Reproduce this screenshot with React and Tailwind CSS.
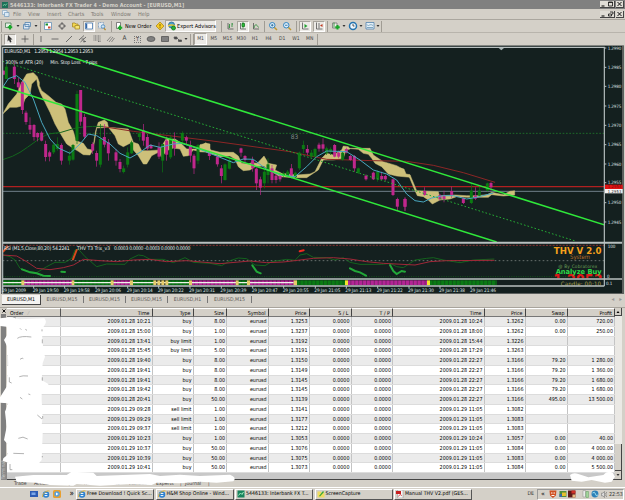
const UP = "#0b7a12";
const DOWN = "#c0278c";
const CLOUD = "#cdc07a";

const menus = [
  ["File", "w-[15px]"],
  ["View", "w-[19px]"],
  ["Insert", "w-[21px]"],
  ["Charts", "w-[23px]"],
  ["Tools", "w-[20px]"],
  ["Window", "w-[27px]"],
  ["Help", "w-[14px]"],
];

const timeframes = ["M5", "M15", "M30", "H1", "H4", "D1", "W1", "MN"];

const chartTabs = [
  ["EURUSD,M15", "w-[43px]"],
  ["EURUSD,M15", "w-[42px]"],
  ["EURUSD,M15", "w-[42px]"],
  ["EURUSD,H1", "w-[40px]"],
  ["EURUSD,M15", "w-[44px]"],
];

const columns = [
  ["Time", "w-[91.5px]"],
  ["Type", "w-[41px]"],
  ["Size", "w-[33.5px]"],
  ["Symbol", "w-[41.5px]"],
  ["Price", "w-[41px]"],
  ["S / L", "w-[42px]"],
  ["T / P", "w-[41.5px]"],
  ["Time", "w-[91.5px]"],
  ["Price", "w-[41px]"],
  ["Swap", "w-[42px]"],
  ["Profit", "w-[47.5px]"],
];

const orders = [
  ["2009.01.28 10:21", "buy", "8.00", "1.3253", "2009.01.28 10:24", "1.3262", "0.00", "720.00"],
  ["2009.01.28 15:00", "buy", "1.00", "1.3237", "2009.01.28 18:00", "1.3262", "0.00", "250.00"],
  ["2009.01.28 13:41", "buy limit", "1.00", "1.3192", "2009.01.28 15:44", "1.3226", "", ""],
  ["2009.01.28 15:45", "buy limit", "5.00", "1.3191", "2009.01.28 17:29", "1.3263", "", ""],
  ["2009.01.28 19:40", "buy", "8.00", "1.3150", "2009.01.28 22:27", "1.3166", "79.20", "1 280.00"],
  ["2009.01.28 19:41", "buy", "8.00", "1.3149", "2009.01.28 22:27", "1.3166", "79.20", "1 360.00"],
  ["2009.01.28 19:41", "buy", "8.00", "1.3145", "2009.01.28 22:27", "1.3166", "79.20", "1 680.00"],
  ["2009.01.28 19:42", "buy", "8.00", "1.3145", "2009.01.28 22:27", "1.3166", "79.20", "1 680.00"],
  ["2009.01.28 20:41", "buy", "50.00", "1.3139", "2009.01.28 22:27", "1.3166", "495.00", "13 500.00"],
  ["2009.01.29 09:28", "sell limit", "1.00", "1.3141", "2009.01.29 11:05", "1.3082", "", ""],
  ["2009.01.29 09:29", "sell limit", "1.00", "1.3177", "2009.01.29 11:05", "1.3083", "", ""],
  ["2009.01.29 09:37", "sell limit", "1.00", "1.3212", "2009.01.29 11:05", "1.3083", "", ""],
  ["2009.01.29 10:23", "buy", "1.00", "1.3053", "2009.01.29 10:24", "1.3057", "0.00", "40.00"],
  ["2009.01.29 10:37", "buy", "50.00", "1.3076", "2009.01.29 11:05", "1.3084", "0.00", "4 000.00"],
  ["2009.01.29 10:39", "buy", "50.00", "1.3075", "2009.01.29 11:05", "1.3083", "0.00", "4 000.00"],
  ["2009.01.29 10:41", "buy", "50.00", "1.3073", "2009.01.29 11:05", "1.3084", "0.00", "5 500.00"],
];

// x, high, body top, body bottom, low, rising
const candlesLeft = [
  [11, 80, 80, 92, 92, 0], [19, 55, 68, 105, 105, 1], [43, 55, 68, 105, 120, 0], [55, 102, 115, 130, 145, 0],
  [67, 110, 115, 198, 210, 0], [78, 200, 206, 234, 242, 0], [90, 220, 243, 257, 270, 0], [102, 240, 243, 279, 290, 0],
  [113, 265, 267, 280, 292, 0], [125, 262, 266, 290, 292, 0], [137, 290, 300, 339, 352, 0], [149, 320, 325, 338, 352, 0],
  [161, 295, 302, 325, 330, 1], [172, 280, 300, 315, 320, 1], [184, 298, 303, 350, 362, 0], [208, 320, 335, 350, 362, 1],
  [219, 300, 303, 347, 350, 1], [231, 140, 150, 290, 300, 1], [242, 138, 138, 233, 245, 0], [254, 210, 219, 278, 285, 0],
  [278, 295, 300, 320, 330, 0], [290, 320, 327, 350, 368, 0], [301, 240, 285, 362, 370, 1], [313, 240, 279, 302, 310, 0],
  [325, 285, 295, 328, 350, 0], [348, 315, 325, 350, 365, 0], [360, 345, 354, 375, 385, 0], [371, 365, 373, 384, 388, 1],
  [383, 310, 325, 362, 370, 1], [395, 290, 295, 328, 330, 1], [418, 265, 268, 279, 290, 1], [430, 240, 260, 290, 305, 0],
  [442, 270, 279, 314, 320, 0], [453, 300, 303, 313, 315, 0], [477, 295, 310, 338, 345, 0], [488, 300, 300, 350, 385, 1],
  [500, 278, 290, 332, 350, 0], [512, 275, 280, 340, 345, 1], [523, 265, 290, 312, 335, 0], [547, 262, 267, 290, 300, 1],
  [559, 275, 280, 290, 300, 0], [571, 290, 303, 335, 355, 0], [582, 330, 335, 373, 390, 0], [594, 300, 303, 350, 360, 1],
];

const candlesMiddle = [
  [28, 155, 158, 168, 180, 0], [52, 165, 170, 193, 200, 0], [64, 195, 205, 228, 250, 0], [75, 190, 193, 240, 242, 1],
  [88, 175, 180, 206, 208, 1], [123, 143, 145, 158, 170, 0], [135, 165, 168, 180, 190, 0], [158, 170, 180, 205, 215, 0],
  [169, 203, 206, 250, 270, 0], [181, 230, 238, 263, 285, 0], [193, 200, 215, 250, 265, 1], [204, 175, 193, 225, 250, 1],
  [216, 195, 205, 240, 250, 0], [228, 220, 227, 240, 250, 0], [240, 220, 228, 238, 245, 0], [251, 215, 220, 228, 230, 1],
  [263, 210, 215, 228, 230, 1], [274, 192, 205, 227, 235, 0], [286, 215, 218, 232, 238, 1], [298, 155, 158, 205, 210, 1],
  [310, 122, 135, 147, 160, 1], [322, 135, 147, 158, 165, 0], [334, 150, 158, 170, 172, 1], [345, 143, 147, 170, 172, 1],
  [357, 128, 134, 146, 155, 0], [369, 115, 133, 146, 155, 0], [380, 140, 145, 160, 165, 1], [392, 142, 147, 155, 165, 1],
  [404, 132, 135, 170, 172, 0], [416, 152, 158, 170, 175, 0], [428, 155, 158, 180, 182, 1], [439, 143, 147, 158, 160, 0],
  [451, 165, 168, 180, 182, 0], [463, 165, 168, 205, 215, 0], [475, 203, 205, 218, 222, 1], [498, 223, 227, 238, 242, 0],
  [520, 215, 218, 238, 240, 0], [533, 210, 215, 238, 245, 1], [545, 215, 228, 238, 240, 0], [556, 225, 228, 238, 242, 0],
  [579, 235, 238, 285, 288, 0], [592, 293, 297, 320, 333, 0], [615, 293, 297, 320, 333, 0],
];

const candlesRight = [
  [15, 460, 465, 488, 500, 0], [74, 430, 441, 453, 455, 0], [120, 450, 453, 466, 470, 0], [132, 440, 455, 466, 475, 0],
  [155, 428, 441, 453, 462, 0], [190, 460, 463, 477, 480, 0], [214, 418, 440, 477, 480, 1], [226, 430, 455, 464, 468, 0],
  [238, 425, 440, 455, 458, 1], [262, 416, 418, 440, 442, 1], [273, 414, 417, 430, 440, 0],
];

const prices = [
  ["1.2990", 144], ["1.2985", 202], ["1.2980", 259], ["1.2975", 318], ["1.2970", 376],
  ["1.2965", 434], ["1.2960", 492], ["1.2955", 548], ["1.2950", 608], ["1.2945", 666],
];

const times = [
  ["29 Jan 2009", 5], ["29 Jan 19:50", 98], ["29 Jan 19:58", 191], ["29 Jan 20:06", 285],
  ["29 Jan 20:14", 380], ["29 Jan 20:22", 473], ["29 Jan 20:31", 567], ["29 Jan 20:39", 661],
  ["29 Jan 20:47", 755], ["29 Jan 20:55", 848], ["29 Jan 21:05", 943], ["29 Jan 21:13", 1036],
  ["29 Jan 21:22", 1130], ["29 Jan 21:30", 1224], ["29 Jan 21:38", 1317], ["29 Jan 21:46", 1410],
];

const strip = [
  [8, 57, "#0a7a14"], [72, 146, "#b32595"], [222, 112, "#0a7a14"], [341, 50, "#b32595"], [399, 62, "#0a7a14"],
  [505, 62, "#0a7a14"], [576, 131, "#b32595"], [716, 26, "#0a7a14"], [750, 132, "#b32595"], [890, 145, "#0a7a14"],
  [1044, 237, "#b32595"], [1290, 200, "#0a7a14"],
];

const stripMarks = [
  [64, 9], [215, 8], [332, 9], [390, 9], [460, 9], [472, 9], [484, 9], [496, 9],
  [567, 9], [707, 9], [741, 9], [881, 10], [1035, 9], [1281, 9],
];

function Candles({ data }) {
  return data.map(([x, high, top, bottom, low, rising]) => (
    <g key={x} fill={rising ? UP : DOWN}>
      <rect x={x - 1} y={high} width="2" height={low - high} />
      <rect x={x - 4.5} y={top} width="9" height={bottom - top} />
    </g>
  ));
}

function Chart() {
  return (
    <svg
      viewBox="0 135 1875 747"
      className="block h-[249px] w-[625px] shrink-0"
      fontFamily="'DejaVu Sans Condensed', 'DejaVu Sans', sans-serif"
    >
      <defs>
        <clipPath id="price-pane">
          <rect x="8" y="144" width="1804" height="582" />
        </clipPath>
        <clipPath id="rsi-pane">
          <rect x="8" y="731" width="1804" height="104" />
        </clipPath>
        <clipPath id="strip-pane">
          <rect x="8" y="838" width="1804" height="19" />
        </clipPath>
      </defs>

      <rect x="0" y="135" width="1875" height="747" fill="#d4d0c8" />
      <rect x="3" y="136" width="1869" height="746" fill="#5c605e" />
      <rect x="6" y="138" width="1860" height="741" fill="#14201f" />

      {/* Price pane */}
      <g clipPath="url(#price-pane)" fill="none">
        <path d="M8 400H1812" stroke="#1d6a2a" strokeWidth="3" strokeDasharray="5 5" />
        <path d="M9 560H1812" stroke="#b02020" strokeWidth="3.5" />
        <path d="M9 574H1812" stroke="#70808a" strokeWidth="3" />

        <g fill={CLOUD} stroke={CLOUD} strokeWidth="1.5">
          <g transform="translate(0 132)">
            <path d="M8 210L25 180 50 150 65 115 80 90 100 86 112 98 118 115 118 125 125 140 145 155 168 175 185 180 195 195 205 235 220 262 228 290 250 298 262 315 278 318 270 333 250 332 235 322 215 310 200 300 185 275 165 240 150 205 135 175 120 145 113 125 110 105 95 120 90 150 75 165 68 185 50 190 30 190Z" />
            <path d="M278 318L286 265 290 250 295 235 313 228 322 235 325 250 290 252 284 290Z" />
            <path d="M325 250L385 255 400 295 415 300 425 320 450 320 478 318 500 282 515 285 525 285 540 295 560 315 590 315 600 302 620 298 630 300 630 325 600 323 580 318 565 335 550 337 540 315 520 312 500 320 485 340 475 325 455 335 440 360 430 360 415 335 400 318 390 298 370 308 355 300 345 275Z" />
          </g>
          <g transform="translate(600 300)">
            <path d="M0 138L18 128 32 150 60 157 100 157 115 168 125 190 145 192 155 188 172 190 192 168 205 190 230 195 225 210 245 220 290 225 330 222 345 215 365 175 380 160 400 165 425 150 430 138 445 140 450 147 438 150 430 175 400 180 370 180 355 210 340 220 320 233 285 233 240 230 215 215 200 205 190 198 165 200 150 210 130 212 115 200 105 178 90 168 60 170 30 160 15 155 0 155Z" />
            <path d="M445 145H510L520 165 550 185 590 197 608 207 615 225 630 225 630 232 590 228 565 222 545 200 525 190 515 175 505 163 490 160 475 148Z" />
          </g>
          <g transform="translate(1200 132)">
            <path d="M0 372L12 375 18 390 30 392 50 440 115 443 118 455 165 453 200 455 230 455 262 452 275 445 310 452 330 442 344 440 344 453 310 456 275 452 265 460 230 460 200 460 170 458 150 465 120 468 97 480 85 468 70 458 52 455 45 440 27 397 0 395Z" />
          </g>
        </g>

        <path d="M8 479Q40 470 60 457T110 422 160 400 210 389 310 379" stroke="#14661e" strokeWidth="3" />
        <path d="M310 380L400 394 630 422 870 455 980 478 1120 482 1220 484 1300 496 1390 518 1485 547" stroke="#8c2626" strokeWidth="3" />

        <g transform="translate(0 132)"><Candles data={candlesLeft} /></g>
        <g transform="translate(600 300)"><Candles data={candlesMiddle} /></g>
        <g transform="translate(1200 132)"><Candles data={candlesRight} /></g>

        <g stroke="#4aa8c0" strokeWidth="3" strokeLinejoin="round">
          <path d="M8 262L25 236 50 227 75 247 100 297 125 367 150 417 175 444 210 460 240 432 265 402 290 407 330 432 360 460 390 474 420 457 450 435 480 442 520 432 545 430 600 448 660 472 700 488 730 477 760 478 800 508 840 525 885 530 920 500 950 470 980 453 1040 455 1080 480 1120 510 1160 522 1190 540 1220 582 1245 602 1270 606 1295 594 1330 587 1360 587 1400 597 1430 592 1480 579" />
        </g>

        <g stroke="#2fe83a">
          <path d="M100 136L1814 675" strokeWidth="4.5" />
          <path d="M8 260L1490 726" strokeWidth="4.5" />
          <path d="M8 184L1726 723" stroke="#25a834" strokeWidth="3" strokeDasharray="5 6" />
        </g>
        <path d="M1496 144h16l-8 7z" fill="#a8b4b4" />
        <text x="872" y="417" fontSize="19" fill="#808a88" fontFamily="'DejaVu Sans Mono'">83</text>
      </g>

      {/* Price pane captions */}
      <g fill="#e6eaea" fontSize="15">
        <text x="13" y="159" textLength="79">EURUSD,M1</text>
        <text x="103" y="159" textLength="176">1.2953 1.2954 1.2953 1.2953</text>
        <text x="16" y="191" textLength="114">300% of ATR (20)</text>
        <text x="151" y="191" textLength="91">Min. Stop Loss</text>
        <text x="248" y="191" textLength="44">- 7 pips</text>
      </g>

      {/* Oscillator pane */}
      <g clipPath="url(#rsi-pane)" fill="none" strokeWidth="3">
        <path d="M8 736H1812" stroke="#8a3030" strokeDasharray="6 4" />
        <path d="M8 782H1812" stroke="#68706e" strokeDasharray="5 7" />
        <path d="M8 830H1812" stroke="#14501c" strokeDasharray="3 4" />
        <path d="M8 765L30 770 45 780 60 805 90 815 110 818 140 800 165 787 195 787 215 775 225 750 235 747 255 770 290 800 320 792 375 793 390 777 415 765 430 767 450 778 490 778 520 788 555 773 580 787 630 790 665 797 690 782 715 774 740 776 765 795 795 797 815 785 860 778 885 781 900 765 920 761 940 772 980 773 1005 780 1030 773 1050 787 1080 793 1145 793 1170 790 1190 800 1210 803 1245 780 1280 775 1300 773 1330 780 1380 788 1420 780 1483 777" stroke="#14701e" strokeWidth="2.5" />
        <path d="M8 765L50 768 80 785 110 805 150 809 190 803 220 795 250 778 300 782 350 785 400 780 450 778 500 785 560 782 660 791 750 783 800 788 850 786 900 780 940 775 1000 773 1050 777 1100 785 1150 790 1245 795 1290 785 1340 782 1483 781" stroke="#a02838" />
        <g strokeWidth="6" strokeLinecap="round">
          <path d="M10 754L22 741M230 750L219 778" stroke="#d84a1c" />
          <path d="M899 754L911 751" stroke="#f02a20" />
          <path d="M66 808L90 817 110 820 130 827 150 828M184 815L195 816M757 796L770 815 782 820M1050 805L1065 813 1080 817 1098 827M1170 795L1180 813 1190 822 1205 813 1215 815" stroke="#22a838" />
        </g>
      </g>

      <g fill="#e6eaea" fontSize="15">
        <text x="12" y="749" textLength="197">RSI (M1,5,Close,80,20) 54.2241</text>
        <text x="231" y="749" textLength="99">THV T3 Trix_v3</text>
        <text x="342" y="749" textLength="229">0.0003 0.0000 -0.0003 0.0000 0.0000</text>
      </g>

      <g clipPath="url(#rsi-pane)" textAnchor="middle">
        <text x="1733" y="761" fontSize="27" fontWeight="bold" fill="#f5a01c" textLength="143" lengthAdjust="spacingAndGlyphs">THV V 2.0</text>
        <text x="1740" y="778" fontSize="18" fill="#b86c2c" textLength="60">System</text>
        <text x="1733" y="803" fontSize="14" fill="#6ea05a" textLength="117">@ By Cobratorex</text>
        <text x="1734" y="859" fontSize="50" fontWeight="bold" fill="#e01818" textLength="148" lengthAdjust="spacingAndGlyphs">1.2953</text>
        <text x="1736" y="823" fontSize="21" fontWeight="bold" fill="#2ed848" textLength="138" lengthAdjust="spacingAndGlyphs">Analyze Buy</text>
      </g>

      {/* Trend strip */}
      <g clipPath="url(#strip-pane)">
        {strip.map(([x, width, fill]) => (
          <rect key={x} x={x} y="841" width={width} height="15" fill={fill} />
        ))}
        <path d="M8 848.500H1490" stroke="#14201f" strokeOpacity=".35" strokeWidth="15" strokeDasharray="3 8.720" />
        <path d="M8 848H881" stroke="#eef2ea" strokeWidth="4" />
        {stripMarks.map(([x, width]) => (
          <rect key={x} x={x} y="841" width={width} height="15" fill={x > 1000 ? "#f2e62e" : "#e6cc6a"} />
        ))}
        <text x="1682" y="858" fontSize="18" fill="#b0a850" textLength="121">Candle: 00:10</text>
      </g>

      {/* Frames and axes */}
      <g fill="none" stroke="#b8c0c0">
        <path d="M8 882V142H1813V858" strokeWidth="3.500" />
        <path d="M8 728H1866" strokeWidth="6" />
        <path d="M8 837H1866M8 858H1813" strokeWidth="4" />
        {prices.map(([label, y]) => (
          <path key={label} d={`M1813 ${y}h6`} strokeWidth="3" />
        ))}
        {times.map(([label, x]) => (
          <path key={label} d={`M${x + 3} 858v6`} strokeWidth="3" />
        ))}
      </g>
      <g fill="#dde2e2" fontSize="13.5">
        {prices.map(([label, y]) => (
          <text key={label} x="1823" y={y + 5} textLength="41">{label}</text>
        ))}
        <rect x="1815" y="554" width="53" height="13" fill="#e01414" />
        <rect x="1815" y="567" width="53" height="13" fill="#f4f4f4" />
        <text x="1823" y="565" fontSize="12" textLength="41" fill="#7c0808">1.2954</text>
        <text x="1823" y="578" fontSize="12" textLength="41" fill="#202020">1.2953</text>
        <text x="1823" y="744">100</text>
        <text x="1821" y="833">0</text>
        <text x="1818" y="855">0.1</text>
        {times.map(([label, x]) => (
          <text key={label} x={x} y="876" fontSize="14" textLength={label.length > 11 ? 78 : 73}>{label}</text>
        ))}
      </g>
    </svg>
  );
}

function Icon({ children, className = "w-[14px]" }) {
  return (
    <span className={`flex h-[11px] shrink-0 items-center justify-center ${className}`}>
      <svg viewBox="0 0 16 16" className="size-[8px] overflow-visible" fill="none" stroke="#555" strokeWidth="1.6">
        {children}
      </svg>
    </span>
  );
}

function Separator({ className = "mx-[2px]" }) {
  return <span className={`h-[11px] w-px shrink-0 border-l border-[#a09c94] ${className}`} />;
}

function Caret() {
  return (
    <svg viewBox="0 0 6 4" className="h-[2px] w-[4px] shrink-0" fill="#333">
      <path d="M0 0h6L3 4z" />
    </svg>
  );
}

const pressed = "w-[12px] border border-[#a8a49c] border-r-white border-b-white bg-[#eceae6]";

function MainToolbar() {
  return (
    <div className="flex h-[13px] shrink-0 items-center border-t border-[#aaa69e] bg-[#d4d0c8] text-[5.5px]">
      <Separator className="ml-[1px]" />
      <Icon>
        <path d="M1 2h11v9H1z" fill="#e4f0e4" stroke="#4a7a54" />
        <path d="M10 6v9M5.500 10.500h9" stroke="#18a828" strokeWidth="4" />
      </Icon>
      <Caret />
      <Icon>
        <path d="M4 1h11v8H4zM1 5h11v9H1z" fill="#dce8f4" stroke="#5484b0" />
      </Icon>
      <Caret />
      <Separator className="ml-[2px]" />
      <Icon>
        <path d="M1 1h14v14H1z" fill="#fff" stroke="#6490b8" />
        <path d="M3 5h5" stroke="#189028" strokeWidth="4" />
        <path d="M8 11h5" stroke="#d04a30" strokeWidth="4" />
      </Icon>
      <Icon>
        <circle cx="8" cy="8" r="5" />
        <path d="M8 0v6M8 10v6M0 8h6M10 8h6" />
      </Icon>
      <Icon>
        <path d="M1 2h5l2 2h4v6H1z" fill="#f4d850" stroke="#a88c28" />
        <path d="M6 7h9v7H6z" fill="#f8e470" stroke="#a88c28" />
      </Icon>
      <Icon className={pressed}>
        <path d="M1 2h14v12H1z" fill="#fff" stroke="#4878b0" />
        <path d="M3 3v10" stroke="#3468a8" strokeWidth="3" />
      </Icon>
      <Icon>
        <path d="M1 1h10v11H1z" fill="#e4ecf4" stroke="#7898b8" strokeDasharray="2 1" />
        <circle cx="10" cy="9" r="3.500" fill="#cfe6f8" stroke="#4484b8" />
        <path d="M12 12l3 4" stroke="#b08830" strokeWidth="2.500" />
      </Icon>
      <Separator className="mr-[1px] ml-[2px]" />
      <Icon className="w-[12px]">
        <path d="M3 1h8v12H3z" fill="#fff" stroke="#666" />
        <path d="M10 7v9M5.500 11.500h9" stroke="#18a828" strokeWidth="4" />
      </Icon>
      <span className="w-[28px] whitespace-nowrap text-black">New Order</span>
      <Icon className="w-[13px]">
        <path d="M8 0l8 8-8 8-8-8z" fill="#f6cc28" stroke="#b48c18" />
        <path d="M8 4v5M8 10.500v2" stroke="#604800" />
      </Icon>
      <span className="-ml-px flex h-[12px] w-[51px] shrink-0 items-center border border-[#a8a49c] border-r-white border-b-white bg-[#eceae6] whitespace-nowrap text-black">
        <Icon className="w-[11px]">
          <circle cx="7" cy="6" r="6" fill="#48a0d0" stroke="#2c6890" />
          <path d="M0 8q7-4 14 0" stroke="#e8c838" strokeWidth="3" />
          <circle cx="11" cy="12" r="4" fill="#28b038" stroke="#187820" />
        </Icon>
        Expert Advisors
      </span>
      <Separator className="mr-[1px] ml-[5px]" />
      <Icon>
        <path d="M4 2v12h11" />
        <path d="M7 4v8M5 10h2M12 2v8M12 4h2" stroke="#208830" />
      </Icon>
      <Icon className={pressed}>
        <path d="M3 2v12h11" />
        <path d="M8 0v13" stroke="#208830" />
        <path d="M6 3h5v6H6z" fill="#28c038" stroke="#187820" />
      </Icon>
      <Icon>
        <path d="M3 2v12h11" />
        <path d="M4 12c2-9 5-8 9-1" stroke="#208830" />
      </Icon>
      <Separator className="mx-[1px]" />
      <Icon>
        <path d="M10 10l6 6" stroke="#c09830" strokeWidth="3" />
        <circle cx="6.500" cy="6.500" r="5.500" fill="#dcf0fc" stroke="#3484c0" strokeWidth="2" />
        <path d="M4 6.500h5M6.500 4v5" stroke="#246090" />
      </Icon>
      <Icon>
        <path d="M10 10l6 6" stroke="#c09830" strokeWidth="3" />
        <circle cx="6.500" cy="6.500" r="5.500" fill="#dcf0fc" stroke="#3484c0" strokeWidth="2" />
        <path d="M4 6.500h5" stroke="#246090" />
      </Icon>
      <Separator className="mx-[2px]" />
      <Icon className={pressed}>
        <path d="M3 1v13h12" />
        <path d="M7 4l6 4-6 4z" fill="#20a030" stroke="none" />
      </Icon>
      <span className="w-[2px]" />
      <Icon className={pressed}>
        <path d="M3 1v13h12M8 2v11" />
        <path d="M15 4l-5 3 5 3z" fill="#c03820" stroke="none" />
      </Icon>
      <Separator className="mx-[2px]" />
      <Icon className="w-[12px]">
        <path d="M1 2h9v10H1z" fill="#f0f0e8" stroke="#777" />
        <path d="M4 1v10" stroke="#208830" />
        <path d="M11 6v9M6.500 10.500h9" stroke="#18a828" strokeWidth="4" />
      </Icon>
      <Caret />
      <Icon className="w-[13px]">
        <circle cx="8" cy="8" r="7" fill="#eef6fc" stroke="#2474b0" strokeWidth="3" />
        <path d="M8 4v4h3" stroke="#333" />
      </Icon>
      <Caret />
      <Icon className="w-[13px]">
        <path d="M0 1h16v13H0z" fill="#e4f0f8" stroke="#5484b0" />
        <path d="M2 5c3 6 5-3 12 2M2 11h12" stroke="#6894b0" />
      </Icon>
      <Caret />
      <Separator className="ml-[1px]" />
    </div>
  );
}

function DrawingToolbar() {
  return (
    <div className="flex h-[13px] shrink-0 items-center border-t border-[#b8b4ac] bg-[#d4d0c8] text-[5px] text-[#444]">
      <Separator className="mr-[2px] ml-[1px]" />
      <Icon className={pressed}>
        <path d="M4 0l9 9H9l2 5-3 1-2-5-3 3z" fill="#333" stroke="none" />
      </Icon>
      <Icon className="w-[17px]">
        <path d="M8 1v14M1 8h14" />
      </Icon>
      <Separator className="mx-0" />
      <Icon><path d="M8 2v12" /></Icon>
      <Icon><path d="M1 8h14" /></Icon>
      <Icon><path d="M2 14L14 2" /></Icon>
      <Icon>
        <path d="M0 10L10 1M3 14L14 4M5 8h5M9 13h5M10 10v5" />
      </Icon>
      <Icon>
        <path d="M1 2h14M1 6h14M1 10h14M10 13h5" strokeDasharray="2 1" />
      </Icon>
      <Icon>
        <path d="M0 12L8 3M4 14L12 4M9 14L15 6" strokeWidth="1.200" />
      </Icon>
      <span className="w-[13px] text-center text-[6.5px]">A</span>
      <span className="mx-[3px] flex h-[7px] w-[7px] items-center justify-center border border-dotted border-[#777] text-[5.5px]">T</span>
      <Icon>
        <ellipse cx="8" cy="8" rx="8" ry="5" fill="#808080" />
      </Icon>
      <Icon>
        <path d="M1 3h14v10H1z" fill="#808080" />
      </Icon>
      <Icon className="w-[12px]">
        <path d="M0 4h6v4H1zM9 10h6v3H9z" fill="#444" />
        <path d="M6 6l5 5" />
      </Icon>
      <Caret />
      <Separator className="mx-[2px]" />
      <Separator className="mx-0" />
      <span className="flex h-[12px] w-[13px] items-center justify-center border border-[#a8a49c] border-r-white border-b-white bg-[#eceae6]">
        M1
      </span>
      {timeframes.map((label) => (
        <span key={label} className="w-[13.7px] text-center">{label}</span>
      ))}
      <Separator className="mx-0" />
    </div>
  );
}

function WindowButtons({ restore }) {
  return (
    <div className="mr-[1px] flex items-center gap-px">
      <svg viewBox="0 0 8 7" className="h-[7px] w-[8px]">
        <path d="M0 0h8v7H0z" fill="#444" /><path d="M0 0h7v6H0z" fill="#e0ddd6" /><path d="M1.500 4.500h3v1h-3z" />
      </svg>
      <svg viewBox="0 0 8 7" className="-ml-[2px] h-[7px] w-[8px]">
        <path d="M0 0h8v7H0z" fill="#444" /><path d="M0 0h7v6H0z" fill="#e0ddd6" />
        <path d={restore ? "M3 1h3v2H5M1.500 3h3v2h-3z" : "M1.500 1h4v4h-4zM1.500 1.500h4"} fill="none" stroke="#111" strokeWidth=".8" />
      </svg>
      <svg viewBox="0 0 8 7" className="h-[7px] w-[8px]">
        <path d="M0 0h8v7H0z" fill="#444" /><path d="M0 0h7v6H0z" fill="#e0ddd6" /><path d="M1.500 1l4 4M5.500 1l-4 4" stroke="#111" strokeWidth="1" />
      </svg>
    </div>
  );
}

function OrdersTable() {
  return (
    <div className="flex h-[172px] shrink-0 bg-[#d4d0c8] pr-[3px]">
      <div className="flex w-[7px] shrink-0 flex-col items-center">
        <svg viewBox="0 0 8 8" className="my-px size-[4px] shrink-0" stroke="#111" strokeWidth="2">
          <path d="M1 1l6 6M7 1L1 7" />
        </svg>
        <span className="w-[5px] grow bg-[#808080]" />
        <span className="flex h-[20px] w-[6px] items-center justify-center bg-[#8a8a8a] text-[4.8px] leading-[6px] text-[#ccc] [writing-mode:sideways-lr]">
          Terminal
        </span>
      </div>

      <div className="flex w-[608px] shrink-0 flex-col">
        <div className="flex h-[9px] text-[5.3px] leading-[8px] text-black">
          <span className="w-[54px] shrink-0 border-t border-r border-b border-t-white border-r-[#555] border-b-[#777] pl-[3px]">
            Order <span className="pl-[3px] text-[#aaa]">⁄</span>
          </span>
          {columns.map(([label, width], index) => (
            <span key={index} className={`shrink-0 border-t border-r border-b border-t-white border-r-[#444] border-b-[#777] pr-[2px] text-right ${width}`}>
              {label}
            </span>
          ))}
        </div>

        {orders.map(([opened, type, size, price, closed, closePrice, swap, profit], index) => (
          <div
            key={index}
            className="flex h-[9.77px] shrink-0 border-b border-[#dcdcdc] text-[5.35px] leading-[9px] text-black odd:bg-white even:bg-[#ebebeb]"
          >
            <span className="w-[54px] shrink-0 border-r border-[#c4c4c4]" />
            {[opened, type, size, "eurusd", price, "0.0000", "0.0000", closed, closePrice, swap, profit].map((value, cell) => (
              <span key={cell} className={`shrink-0 border-r border-[#c4c4c4] pr-[1px] text-right whitespace-nowrap ${columns[cell][1]}`}>
                {value}
              </span>
            ))}
          </div>
        ))}
        <div className="grow border-b border-[#444] bg-[#c8c8c8]" />
      </div>

      <div className="flex w-[7px] shrink-0 flex-col bg-[#ebe9e5]">
        <span className="flex h-[8px] items-center justify-center border-r border-b border-[#444] bg-[#d4d0c8]">
          <svg viewBox="0 0 6 4" className="h-[2px] w-[4px]"><path d="M0 4h6L3 0z" /></svg>
        </span>
        <span className="grow" />
        <span className="h-[27px] border-r border-b border-[#444] bg-[#d4d0c8]" />
        <span className="flex h-[9px] items-center justify-center border-r border-b border-[#444] bg-[#d4d0c8]">
          <Caret />
        </span>
      </div>
    </div>
  );
}

// Paint strokes that hide the order numbers and balance line
function Redactions() {
  return (
    <svg viewBox="0 900 1875 600" className="pointer-events-none absolute top-[300px] left-0 h-[200px] w-[625px]">
      <g fill="#fff" transform="translate(0 900)">
        <path d="M0 55L30 52 60 58 133 55Q142 65 134 75L125 90 130 150 135 170 128 190 125 240 145 252 145 262 125 270 125 300 128 350 125 375 137 385 128 400 125 480 115 492 65 495 40 510 25 512 28 490 8 482 10 475 22 465 30 440 12 420 20 380 15 335 25 310 0 308V292L20 260 25 190 22 140 12 120 25 100 20 80 0 78Z" />
        <path d="M45 530L100 525 200 525 215 515 280 518 290 528 450 522 480 528 540 524 600 528 690 524Q712 532 700 544L650 548 600 545 540 550 470 548 455 555 380 553 300 557 230 552 220 557 150 555 110 548 50 545Z" />
        <path d="M1710 525Q1720 516 1735 522L1765 532 1810 525Q1822 510 1838 518L1845 530 1835 545 1815 548 1775 540 1745 545 1715 542Z" />
      </g>
      <g fill="none" stroke="#8c8c8c" strokeWidth="2" transform="translate(0 900)">
        <path d="M38 50l10 4M60 85l4 4M76 88l5 3M52 115q10-8 42-4M60 178q8-6 10-2M58 230q10-4 26-2M28 232v14l7 3M85 282l6 2M60 292l7 5M112 345l14 12M128 348v8M55 415q14-8 28 2M40 460l32 1M30 492v17h7M126 88v6M127 118v12M127 232v10M127 468v4" />
      </g>
    </svg>
  );
}

function IeIcon() {
  return (
    <svg viewBox="0 0 16 16" className="size-[8px] shrink-0" fill="none">
      <circle cx="8" cy="9" r="5" fill="#e8f4fc" stroke="#2c80d0" strokeWidth="3" />
      <path d="M4 9h9" stroke="#2c80d0" strokeWidth="2" />
      <path d="M1 14C0 8 9 0 15 2" stroke="#e0b030" strokeWidth="1.800" />
    </svg>
  );
}

function TaskButton({ icon, label }) {
  return (
    <div className="flex h-[11px] w-[78px] shrink-0 items-center gap-[1px] border border-t-white border-r-[#555] border-b-[#555] border-l-white pl-[1px] whitespace-nowrap">
      {icon}
      {label}
    </div>
  );
}

function Taskbar() {
  return (
    <div className="flex h-[13px] shrink-0 items-center border-t border-white bg-[#d4d0c8] text-[5.25px] text-black">
      <div className="flex w-[76px] items-center gap-[3.500px] pl-[30px]">
        <svg viewBox="0 0 16 16" className="size-[8px]">
          <path d="M0 2h16v12H0z" fill="#2c5cb4" /><path d="M3 5h8v5H3z" fill="#7ca8e8" />
        </svg>
        <IeIcon />
        <svg viewBox="0 0 16 16" className="size-[8px]">
          <rect width="16" height="16" rx="3" fill="#e8a030" /><circle cx="8" cy="8" r="5.500" fill="#58a0d8" /><path d="M6 5l5 3-5 3z" fill="#fff" />
        </svg>
        <span className="pl-[5px] text-[8px] leading-[8px]">»</span>
      </div>
      <div className="flex gap-[1.500px]">
        <TaskButton icon={<IeIcon />} label="Free Download ! Quick Sc..." />
        <TaskButton icon={<IeIcon />} label="H&M Shop Online - Wind..." />
        <TaskButton
          icon={<svg viewBox="0 0 16 16" className="size-[8px] shrink-0"><path d="M1 1h14v14H1z" fill="#18845c" /><path d="M3 11l4-5 3 3 3-5" stroke="#a0e8c0" strokeWidth="2" fill="none" /></svg>}
          label="5446133: Interbank FX T..."
        />
        <TaskButton
          icon={<svg viewBox="0 0 16 16" className="size-[8px] shrink-0"><path d="M1 3h6l2 2h6v10H1z" fill="#f0dc60" /><path d="M4 12L12 2l2 2-8 9z" fill="#38a838" /></svg>}
          label="ScreenCapture"
        />
        <TaskButton
          icon={<svg viewBox="0 0 16 16" className="size-[8px] shrink-0"><path d="M3 0h11v16H3z" fill="#f8f8f8" stroke="#888" /><path d="M0 2h10v6H0z" fill="#c82020" /><path d="M5 13q4-8 6-1" stroke="#c82020" strokeWidth="1.500" fill="none" /></svg>}
          label="Manual THV V2.pdf (GES..."
        />
      </div>
      <span className="ml-auto pr-[3px] text-[#333]">DE</span>
      <div className="mr-[1px] flex h-[11px] w-[87px] items-center gap-[1.500px] border border-[#999] border-r-white border-b-white pl-[3px]">
        <span className="w-[7px] text-[7px] leading-[7px]">«</span>
        <svg viewBox="0 0 16 16" className="size-[8px]"><path d="M1 1h14l-1 10-6 5-6-5z" fill="#d05020" /><path d="M4 6h3M9 6h3M5 11h6" stroke="#fff" strokeWidth="2" /></svg>
        <svg viewBox="0 0 16 16" className="size-[8px]"><path d="M1 2h14v12H1z" fill="#4c8c38" /><path d="M6 5h8v7H6z" fill="#e8c030" /><path d="M1 8h5v6H1z" fill="#3868a8" /></svg>
        <svg viewBox="0 0 16 16" className="size-[8px]"><path d="M0 1h15v14H0z" fill="#5c1818" /><path d="M7 1h8v6H7z" fill="#d03028" /><path d="M9 9h6v6H9z" fill="#e8b880" /></svg>
        <svg viewBox="0 0 16 16" className="ml-[4px] size-[8px]"><path d="M2 1h5v13H2z" fill="#eee" stroke="#888" /><path d="M8 3h5v12H8z" fill="#a8d8a0" stroke="#589858" /></svg>
        <svg viewBox="0 0 16 16" className="size-[8px]"><circle cx="8" cy="8" r="7" fill="#2c80b8" /><path d="M3 6q5-4 6 2t5 2" stroke="#a0e0f0" strokeWidth="2" fill="none" /></svg>
        <svg viewBox="0 0 16 16" className="size-[7px]" fill="none" stroke="#777" strokeWidth="1.500"><path d="M1 5h3l4-4v14l-4-4H1z" fill="#ddd" /><path d="M10 5q3 3 0 6M12 2q6 6 0 12" /></svg>
        <span className="text-[5.4px] text-[#333]">22:53</span>
      </div>
    </div>
  );
}

export default function App() {
  return (
    <div className="relative flex h-[500px] w-[625px] flex-col overflow-hidden bg-[#d4d0c8] font-['DejaVu_Sans_Condensed','DejaVu_Sans',sans-serif]">

      {/* Title bar */}
      <div className="flex h-[9px] shrink-0 items-center justify-between bg-[#808080]">
        <div className="flex items-center gap-[2px] pl-[2px]">
          <svg viewBox="0 0 12 12" className="size-[6px]">
            <path d="M0 0h12v12H0z" fill="#1c7058" /><path d="M2 8l3-4 2 3 3-4" stroke="#80d0a8" strokeWidth="1.500" fill="none" />
          </svg>
          <span className="text-[5.4px] leading-[8px] font-bold whitespace-nowrap text-[#d4d0c8]">
            5446133: Interbank FX Trader 4 - Demo Account - [EURUSD,M1]
          </span>
        </div>
        <WindowButtons />
      </div>

      {/* Menu bar */}
      <div className="flex h-[10px] shrink-0 items-center justify-between">
        <div className="flex items-center pl-[2px] text-[5.6px] text-[#7c7973]">
          <svg viewBox="0 0 16 14" className="mr-[3px] h-[7px] w-[8px]">
            <path d="M1 1h9v8H1z" fill="#e8f0f8" stroke="#6894b8" /><path d="M5 5h9v8H5z" fill="#dceaf4" stroke="#4c80b0" />
          </svg>
          {menus.map(([label, width]) => (
            <span key={label} className={width}>{label}</span>
          ))}
        </div>
        <WindowButtons restore />
      </div>

      <MainToolbar />
      <DrawingToolbar />
      <Chart />

      {/* Chart tabs */}
      <div className="flex h-[14px] shrink-0 items-start border-b border-[#a8a49c] pl-[2px] text-[5.2px] leading-[9px] text-[#5c5954]">
        <span className="mt-px h-[10px] w-[39px] border-r border-b border-[#444] bg-[#f4f3f1] text-center text-black">
          EURUSD,M1
        </span>
        {chartTabs.map(([label, width], index) => (
          <span key={index} className={`mt-[2px] h-[7px] border-r border-[#777] text-center leading-[7px] ${width}`}>
            {label}
          </span>
        ))}
        <span className="ml-auto flex gap-[5px] pr-[3px] text-[6px] text-[#999]">
          <span>◂</span>
          <span>▸</span>
        </span>
      </div>

      <OrdersTable />

      {/* Terminal tabs */}
      <div className="flex h-[7px] shrink-0 pl-[14px] text-[5.2px] leading-[7px] text-[#444]">
        <span className="w-[20px]">Trade</span>
        <span className="w-[50px]">Account History</span>
        <span className="w-[22px]">News</span>
        <span className="w-[23px]">Alerts</span>
        <span className="w-[27px]">Mailbox</span>
        <span className="w-[24px]">Experts</span>
        <span className="w-[5px]">|</span>
        <span className="w-[23px]">Journal</span>
        <span>|</span>
      </div>

      <Taskbar />
      <Redactions />
    </div>
  );
}
